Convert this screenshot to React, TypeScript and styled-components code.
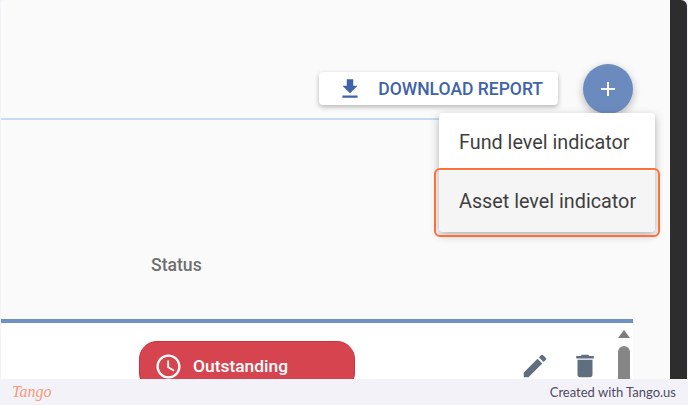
import { createGlobalStyle } from "styled-components";
import styled from "styled-components";
import { MdAccessTime, MdAdd, MdDelete, MdEdit, MdFileDownload } from "react-icons/md";

const GlobalStyle = createGlobalStyle`
  html, body {
    margin: 0;
    padding: 0;
    background: #f3f2f8;
    font-family: Roboto, "Liberation Sans", sans-serif;
  }
`;

const Page = styled.div`
  width: 688px;
  height: 405px;
  overflow: hidden;
  display: grid;
  grid-template-rows: 379px 26px;
`;

const Screen = styled.div`
  display: flex;
  min-height: 0;
  padding-left: 1px;
`;

const Content = styled.main`
  position: relative;
  flex: 1;
  min-width: 0;
  background: #fafafa;
  border-radius: 4px 0 0 0;
  padding-right: 37px;
  overflow: hidden;
`;

const DarkBar = styled.div`
  width: 17px;
  margin-right: 1px;
  background: #2d2d2d;
  border-radius: 0 6px 0 0;
`;

const Toolbar = styled.div`
  height: 120px;
  box-sizing: border-box;
  padding-top: 64px;
  border-bottom: 2px solid #c8daee;
  display: flex;
  justify-content: flex-end;
  align-items: flex-start;
  gap: 25px;
`;

const DownloadButton = styled.button`
  margin-top: 8px;
  width: 239px;
  height: 33px;
  padding: 0 15px 0 18px;
  border: 0;
  border-radius: 4px;
  background: #fff;
  color: #3f63a8;
  box-shadow: 0 2px 5px rgba(0, 0, 0, 0.28);
  font: 500 17.5px Roboto, sans-serif;
  display: flex;
  align-items: center;
  justify-content: space-between;
  white-space: nowrap;
`;

const AddButton = styled.button`
  width: 50px;
  height: 50px;
  padding: 0;
  border: 0;
  border-radius: 50%;
  background: #6b8bbe;
  color: #fff;
  box-shadow: 0 3px 8px rgba(0, 0, 0, 0.28);
  display: flex;
  align-items: center;
  justify-content: center;
`;

const Menu = styled.ul`
  position: absolute;
  top: 113px;
  left: 438px;
  width: 216px;
  margin: 0;
  padding: 0;
  list-style: none;
  background: #fff;
  border-radius: 4px;
  box-shadow: 0 3px 9px rgba(0, 0, 0, 0.3);
`;

const MenuItem = styled.li<{ $active?: boolean }>`
  height: ${(p) => (p.$active ? "61px" : "58px")};
  padding-left: 20px;
  display: flex;
  align-items: center;
  font-size: 19.8px;
  color: #3f3f3f;
  position: relative;
  background: ${(p) => (p.$active ? "#f5f5f5" : "transparent")};
  border-radius: ${(p) => (p.$active ? "0 0 4px 4px" : "4px 4px 0 0")};
`;

const Highlight = styled.span`
  position: absolute;
  inset: -3px -5px -5px -5px;
  border: 2px solid #ff6f3c;
  border-radius: 6px;
`;

const HeaderRow = styled.div`
  height: 203px;
  box-sizing: border-box;
  padding: 135px 0 0 150px;
  border-bottom: 4px solid #6f90c2;
  color: #6f6f6f;
  font-size: 17.6px;
  font-weight: 500;
  line-height: 20px;
`;

const TableRow = styled.div`
  height: 60px;
  background: #fff;
  box-sizing: border-box;
  padding: 18px 0 0 138px;
  display: flex;
  align-items: flex-start;
`;

const StatusBadge = styled.div`
  width: 216px;
  height: 50px;
  box-sizing: border-box;
  padding-left: 14px;
  border: 1px solid #d0303d;
  border-radius: 18px;
  background: #d5444f;
  color: #fff;
  font-size: 17.4px;
  font-weight: 500;
  display: flex;
  align-items: center;
  gap: 10px;
`;

const RowActions = styled.div`
  margin-left: 165px;
  padding-top: 10px;
  display: flex;
  gap: 20px;
  color: #5f6f80;
`;

const ScrollTrack = styled.div`
  margin-left: 18px;
  margin-top: -11px;
  width: 12px;
  display: flex;
  flex-direction: column;
  align-items: center;
  gap: 8px;
`;

const ScrollArrow = styled.div`
  width: 0;
  height: 0;
  border-left: 6px solid transparent;
  border-right: 6px solid transparent;
  border-bottom: 8px solid #7c7c7c;
`;

const ScrollThumb = styled.div`
  width: 12px;
  height: 60px;
  border-radius: 6px;
  background: #868686;
`;

const Footer = styled.footer`
  background: #f3f2f8;
  padding: 0 12px 0 12px;
  display: flex;
  align-items: center;
  justify-content: space-between;
`;

const TangoMark = styled.span`
  font: italic 16px "Liberation Serif", serif;
  color: #f79a78;
`;

const Credit = styled.span`
  font: 13px Lato, sans-serif;
  color: #4f4a63;
`;

export default function App() {
  return (
    <Page>
      <GlobalStyle />
      <Screen>
        <Content>
          <Toolbar>
            <DownloadButton>
              <MdFileDownload size={26} />
              DOWNLOAD REPORT
            </DownloadButton>
            <AddButton>
              <MdAdd size={24} />
            </AddButton>
          </Toolbar>
          <HeaderRow>Status</HeaderRow>
          <TableRow>
            <StatusBadge>
              <MdAccessTime size={29} />
              Outstanding
            </StatusBadge>
            <RowActions>
              <MdEdit size={30} />
              <MdDelete size={30} />
            </RowActions>
            <ScrollTrack>
              <ScrollArrow />
              <ScrollThumb />
            </ScrollTrack>
          </TableRow>
          <Menu>
            <MenuItem>Fund level indicator</MenuItem>
            <MenuItem $active>
              Asset level indicator
              <Highlight />
            </MenuItem>
          </Menu>
        </Content>
        <DarkBar />
      </Screen>
      <Footer>
        <TangoMark>Tango</TangoMark>
        <Credit>Created with Tango.us</Credit>
      </Footer>
    </Page>
  );
}
